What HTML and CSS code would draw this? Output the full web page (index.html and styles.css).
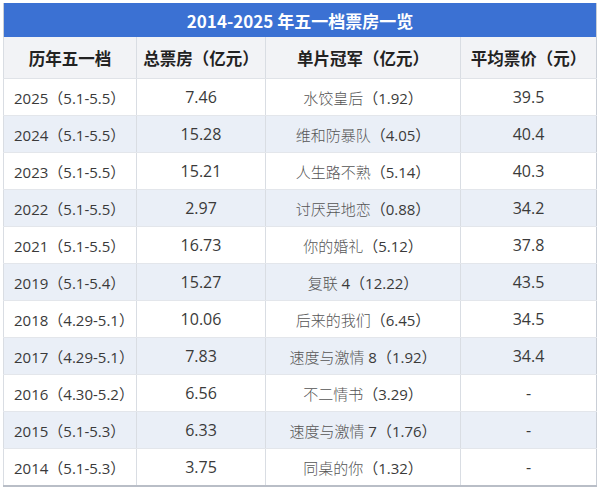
FILE: index.html
```html
<!DOCTYPE html>
<html lang="zh">
<head>
<meta charset="utf-8">
<link rel="stylesheet" href="styles.css">
</head>
<body>
<div class="wrap">
<table class="box">
  <colgroup><col class="c1"><col class="c2"><col class="c3"><col class="c4"></colgroup>
  <thead>
    <tr class="title"><th colspan="4">2014-2025 年五一档票房一览</th></tr>
    <tr class="head"><th>历年五一档</th><th>总票房（亿元）</th><th>单片冠军（亿元）</th><th>平均票价（元）</th></tr>
  </thead>
  <tbody>
    <tr><td class="yr">2025（5.1-5.5）</td><td class="num">7.46</td><td><span class="zh">水饺皇后</span>（1.92）</td><td class="num">39.5</td></tr>
    <tr class="alt"><td class="yr">2024（5.1-5.5）</td><td class="num">15.28</td><td><span class="zh">维和防暴队</span>（4.05）</td><td class="num">40.4</td></tr>
    <tr><td class="yr">2023（5.1-5.5）</td><td class="num">15.21</td><td><span class="zh">人生路不熟</span>（5.14）</td><td class="num">40.3</td></tr>
    <tr class="alt"><td class="yr">2022（5.1-5.5）</td><td class="num">2.97</td><td><span class="zh">讨厌异地恋</span>（0.88）</td><td class="num">34.2</td></tr>
    <tr><td class="yr">2021（5.1-5.5）</td><td class="num">16.73</td><td><span class="zh">你的婚礼</span>（5.12）</td><td class="num">37.8</td></tr>
    <tr class="alt"><td class="yr">2019（5.1-5.4）</td><td class="num">15.27</td><td><span class="zh">复联</span> 4（12.22）</td><td class="num">43.5</td></tr>
    <tr><td class="yr">2018（4.29-5.1）</td><td class="num">10.06</td><td><span class="zh">后来的我们</span>（6.45）</td><td class="num">34.5</td></tr>
    <tr class="alt"><td class="yr">2017（4.29-5.1）</td><td class="num">7.83</td><td><span class="zh">速度与激情</span> 8（1.92）</td><td class="num">34.4</td></tr>
    <tr><td class="yr">2016（4.30-5.2）</td><td class="num">6.56</td><td><span class="zh">不二情书</span>（3.29）</td><td class="num">-</td></tr>
    <tr class="alt"><td class="yr">2015（5.1-5.3）</td><td class="num">6.33</td><td><span class="zh">速度与激情</span> 7（1.76）</td><td class="num">-</td></tr>
    <tr><td class="yr">2014（5.1-5.3）</td><td class="num">3.75</td><td><span class="zh">同桌的你</span>（1.32）</td><td class="num">-</td></tr>
  </tbody>
</table>
</div>
</body>
</html>
```
FILE: styles.css
```css
html, body {
  margin: 0;
  padding: 0;
  background: #ffffff;
}
.wrap {
  padding: 3px 4px 0 3px;
}
.box {
  width: 593px;
  border-collapse: collapse;
  table-layout: fixed;
  font-family: "Open Sans", "Noto Sans CJK SC", sans-serif;
  color: #333333;
  border-left: 1px solid #c9ced6;
  border-right: 1px solid #c9ced6;
  border-bottom: 2px solid #b9bec7;
}
.c1 { width: 133px; }
.c2 { width: 129px; }
.c3 { width: 195px; }
.c4 { width: 136px; }
.title th {
  height: 34px;
  padding: 0;
  background: #3b71d3;
  color: #ffffff;
  font-family: "Noto Sans CJK SC", sans-serif;
  font-size: 17px;
  font-weight: 700;
  text-align: center;
}
.head th {
  height: 41px;
  padding: 0;
  background: #f2f3f6;
  font-family: "Noto Sans CJK SC", sans-serif;
  font-size: 16.5px;
  font-weight: 700;
  color: #222222;
  text-align: center;
  border-left: 1px solid #d9dde3;
  border-bottom: 1px solid #e0e3e8;
}
td {
  height: 36px;
  padding: 0;
  font-size: 15px;
  text-align: center;
  border-left: 1px solid #d9dde3;
  border-bottom: 1px solid #e3e6eb;
  color: #3a3a3a;
}
td.num {
  font-size: 16px;
}
td.yr {
  text-align: left;
  padding-left: 10px;
}
.zh {
  font-family: "Noto Sans CJK SC", sans-serif;
  font-weight: 300;
  color: #555555;
}
tr.alt td {
  background: #eaeff7;
}
```
